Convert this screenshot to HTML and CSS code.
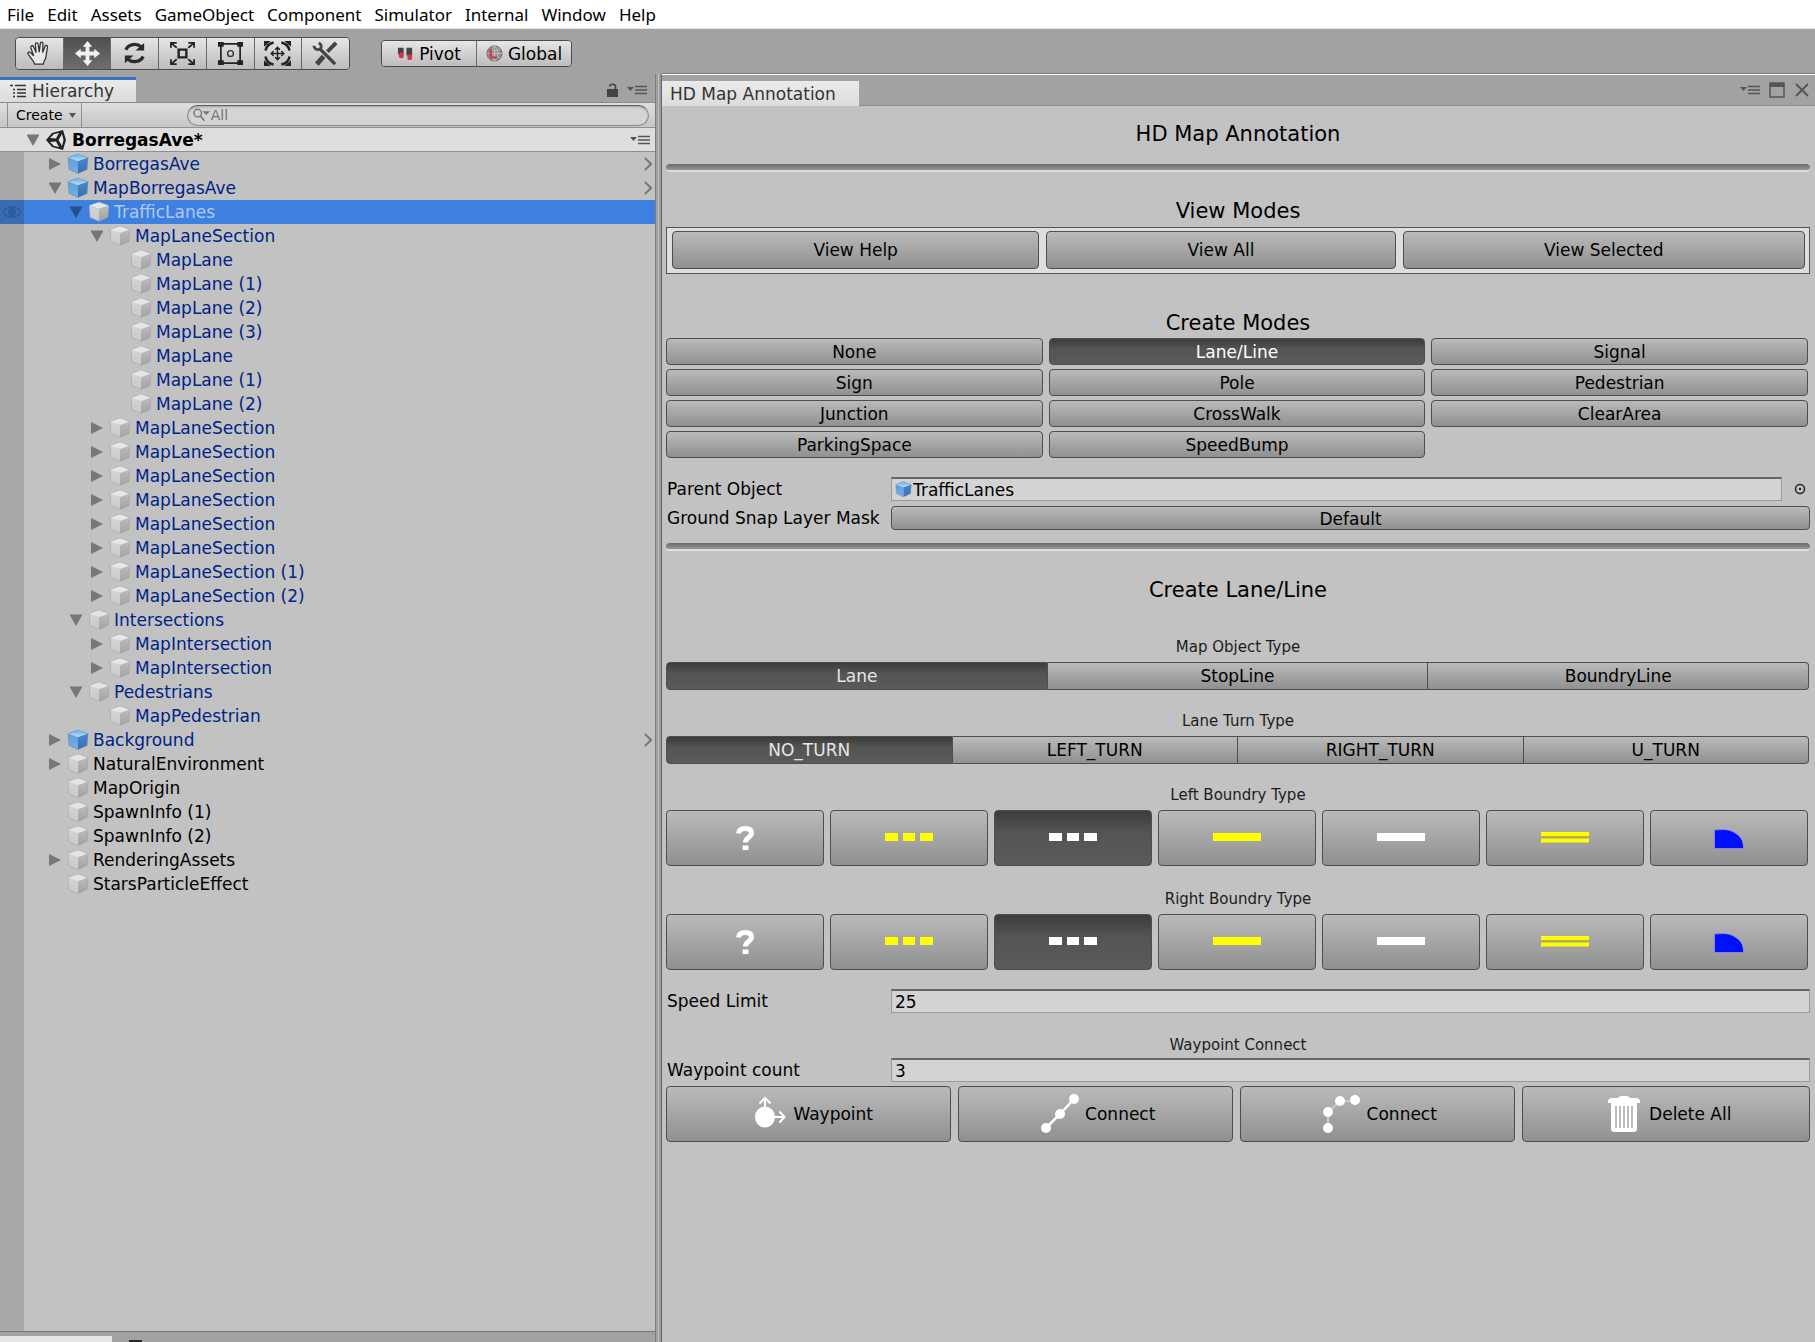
FILE: index.html
```html
<!DOCTYPE html>
<html lang="en">
<head>
<meta charset="utf-8">
<title>HD Map Annotation</title>
<link rel="stylesheet" href="styles.css">
</head>
<body>
<svg class="defs" aria-hidden="true">
  <defs>
    <linearGradient id="blueLeft" x1="0" y1="0" x2="0" y2="1"><stop offset="0" stop-color="#5c9edb"/><stop offset="1" stop-color="#78b0e2"/></linearGradient>
    <linearGradient id="blueRight" x1="0" y1="0" x2="0" y2="1"><stop offset="0" stop-color="#4a86c8"/><stop offset="1" stop-color="#3a70b4"/></linearGradient>
    <linearGradient id="blueTop" x1="0" y1="0" x2="0" y2="1"><stop offset="0" stop-color="#6fb0ea"/><stop offset="1" stop-color="#b4dcfa"/></linearGradient>
    <linearGradient id="greyLeft" x1="0" y1="0" x2="0" y2="1"><stop offset="0" stop-color="#d4d4d4"/><stop offset="1" stop-color="#c9c9c9"/></linearGradient>
    <linearGradient id="greyRight" x1="0" y1="0" x2="0" y2="1"><stop offset="0" stop-color="#bdbdbd"/><stop offset="1" stop-color="#a2a2a2"/></linearGradient>
  </defs>
  <symbol id="cube-blue" viewBox="0 0 22 22">
    <path d="M1 4.500 11 8v12.500L2 16.500z" fill="url(#blueLeft)"/>
    <path d="M21 4.500 11 8v12.500l9-4z" fill="url(#blueRight)"/>
    <path d="M1 4.500 11 1l10 3.500L11 8z" fill="url(#blueTop)"/>
    <path d="M1 4.500 11 1l10 3.500-1 12-9 4-9-4z" fill="none" stroke="#5585b5" stroke-opacity=".5"/>
  </symbol>
  <symbol id="cube-grey" viewBox="0 0 22 22">
    <path d="M1 4.500 11 8v12.500L2 16.500z" fill="url(#greyLeft)"/>
    <path d="M21 4.500 11 8v12.500l9-4z" fill="url(#greyRight)"/>
    <path d="M1 4.500 11 1l10 3.500L11 8z" fill="#e6e6e6"/>
    <path d="M1 4.500 11 1l10 3.500-1 12-9 4-9-4z" fill="none" stroke="#8c8c8c" stroke-opacity=".35"/>
  </symbol>
  <symbol id="closed" viewBox="0 0 12 14"><path d="M0 1l12 6-12 6z" fill="currentColor"/></symbol>
  <symbol id="open" viewBox="0 0 12 14"><path d="M-.5 1.500h13L6 13z" fill="currentColor"/></symbol>
  <symbol id="chevron" viewBox="0 0 8 14"><path d="M1 1l6 6-6 6" fill="none" stroke="#777" stroke-width="2"/></symbol>
  <symbol id="menu" viewBox="0 0 20 12"><path d="M0 3h7L3.500 7z" fill="#555"/><path d="M8 2.500h12M8 6h12M8 9.500h12" stroke="#555" stroke-width="1.500"/></symbol>
  <symbol id="unknown" viewBox="0 0 48 24"><path d="M17.500 7.500C18 3 21 2.500 24.500 2.500c4 0 6 1.500 6 4.500 0 4.500-6 4-6 9.500" fill="none" stroke="#fff" stroke-width="5"/><path d="M21.500 19.500h6V24h-6z" fill="#fff"/></symbol>
  <symbol id="dashed" viewBox="0 0 48 24"><path d="M0 7h13v8H0zM18 7h12v8H18zM35 7h13v8H35z" fill="currentColor"/></symbol>
  <symbol id="solid" viewBox="0 0 48 24"><path d="M0 7h48v8H0z" fill="currentColor"/></symbol>
  <symbol id="double" viewBox="0 0 48 24"><path d="M0 6h48v4H0zM0 12.500h48v4H0z" fill="#ffff00"/><path d="M0 10.500h48v1.500H0z" fill="#b5b52a"/></symbol>
  <symbol id="curb" viewBox="0 0 48 24"><path d="M9.500 4c10-.8 16-.8 22 4 5 3.500 7 7 7 14.500h-29z" fill="#0010ff" stroke="#9a9ae0" stroke-width=".7"/></symbol>
</svg>

<nav class="menubar">
  <a href="#">File</a><a href="#">Edit</a><a href="#">Assets</a><a href="#">GameObject</a><a href="#">Component</a><a href="#">Simulator</a><a href="#">Internal</a><a href="#">Window</a><a href="#">Help</a>
</nav>

<header class="toolbar">
  <div class="tools">
    <button aria-label="Hand"><svg viewBox="0 0 30 28"><path d="M10 25c-1-4-6-8-7-11-.3-1.800 2-2 3.500-.3L9 16.500 6 8c-.5-2 2-2.800 2.800-1l2.700 6L10.700 4.500c0-2 2.600-2.200 3 0l1 8 1.200-9c.3-2 2.700-1.800 2.700.2l-.3 9.300 2.400-6.500c.8-1.800 3-1 2.600 1-.7 3.500-1 7-1.800 10.500-.5 3-2.500 4-2.500 7z" fill="#e8e8e8" stroke="#333" stroke-width="1.300"/></svg></button>
    <button class="on" aria-label="Move"><svg viewBox="0 0 30 28"><path d="M15 1l5 6h-3v5h5V9l6 5-6 5v-3h-5v5h3l-5 6-5-6h3v-5H8v3l-6-5 6-5v3h5V7h-3z" fill="#f2f2f2"/></svg></button>
    <button aria-label="Rotate"><svg viewBox="0 0 30 28"><path d="M6 10c3-6 11-7 16-3M24 17c-3 6-11 7-16 3" fill="none" stroke="#2b2b2b" stroke-width="3.500"/><path d="M25 3v8h-9zM5 24v-8h9z" fill="#2b2b2b"/></svg></button>
    <button aria-label="Scale"><svg viewBox="0 0 30 28"><path d="M11 10h8v8h-8z" fill="none" stroke="#222" stroke-width="2.500"/><path d="M3 3l6 5M27 3l-6 5M3 25l6-5M27 25l-6-5M3 8V3h6M21 3h6v5M3 20v5h6M21 25h6v-5" fill="none" stroke="#222" stroke-width="1.800"/></svg></button>
    <button aria-label="Rect"><svg viewBox="0 0 30 28"><path d="M5 4h20v20H5z" fill="none" stroke="#222" stroke-width="1.800"/><path d="M2 2h6v5H2zM22 2h6v5h-6zM2 21h6v5H2zM22 21h6v5h-6z" fill="#222"/><circle cx="15" cy="14" r="3" fill="none" stroke="#333" stroke-width="1.500"/></svg></button>
    <button aria-label="Transform"><svg viewBox="0 0 30 28"><path d="M9 14h12M15 8v12M12.500 10 15 7.500l2.500 2.500M12.500 18l2.500 2.500 2.500-2.500M11 11.500 8.500 14l2.500 2.500M19 11.500l2.500 2.500-2.500 2.500" fill="none" stroke="#222" stroke-width="1.500"/><path d="M2.500 11C3.500 6 6 3.500 11 2.500M19 2.500c5 1 7.500 3.500 8.500 8.500M27.500 17c-1 5-3.500 7.500-8.500 8.500M11 25.500c-5-1-7.500-3.500-8.500-8.500" fill="none" stroke="#222" stroke-width="2.600"/><path d="M1 1h7L1 7zM29 1h-7l7 6zM1 27h7l-7-6zM29 27h-7l7-6z" fill="#222"/></svg></button>
    <button aria-label="Custom tools"><svg viewBox="0 0 30 28"><path d="M26 3 17 12" stroke="#444" stroke-width="4"/><path d="M13 17l-7 8" stroke="#444" stroke-width="5"/><path d="M9 9l16 16" stroke="#444" stroke-width="3.500"/><path d="M8 3c4 2 3 7-1 7-2 0-4-2-4-4" fill="none" stroke="#444" stroke-width="2.800"/></svg></button>
  </div>
  <div class="tools pivots">
    <button><svg class="small" viewBox="0 0 18 16"><path d="M1 2h6v7H1zM10 2h6v8h-6z" fill="#444"/><rect x="2" y="7" width="5" height="6" rx="2" fill="#d5374a"/><rect x="11" y="9" width="5" height="6" rx="2" fill="#d5374a"/></svg>Pivot</button>
    <button><svg class="small" viewBox="0 0 18 18"><circle cx="9" cy="9" r="8" fill="#8b8b8b" stroke="#666"/><path d="M9 1v16M1 9h16M3 4c4 3 8 3 12 0M3 14c4-3 8-3 12 0M9 1c-5 4-5 12 0 16 5-4 5-12 0-16" fill="none" stroke="#d0d0d0" stroke-width=".8"/><path d="M5 4v9h7" fill="none" stroke="#d5374a" stroke-width="2.400"/></svg>Global</button>
  </div>
</header>

<main class="workspace">
  <section class="hierarchy">
    <div class="tabstrip">
      <h2 class="tab"><svg viewBox="0 0 16 14"><path d="M0 1.500h3M5 1.500h11M3 5.500h2M7 5.500h9M3 9h2M7 9h9M3 12.500h2M7 12.500h9" stroke="#333" stroke-width="1.500"/></svg>Hierarchy</h2>
      <div class="tabicons">
        <svg class="lock" viewBox="0 0 11 14"><path d="M0 6h11v8H0z" fill="#444"/><path d="M2.500 3.500C3 .5 8.500.5 8.500 3.500V6" fill="none" stroke="#444" stroke-width="1.600"/></svg>
        <svg class="menuicon"><use href="#menu"/></svg>
      </div>
    </div>
    <div class="searchbar">
      <button class="create">Create <svg viewBox="0 0 7 5"><path d="M0 0h7L3.500 5z" fill="#555"/></svg></button>
      <label class="search"><svg viewBox="0 0 18 14"><circle cx="5" cy="5" r="4" fill="none" stroke="#777" stroke-width="1.500"/><path d="M8 8l4 5" stroke="#777" stroke-width="1.800"/><path d="M10 3h8l-4 4z" fill="#777"/></svg><input type="text" placeholder="All" aria-label="Search hierarchy"></label>
    </div>
    <div class="scene">
      <svg class="fold"><use href="#open"/></svg>
      <svg class="unity" viewBox="0 0 22 22"><path d="M1 11 7 4l11-3 3 10-3 10-11-3z" fill="#222"/><path d="M5 9l4-4 5-1-3 5.500zM5 13l4 4 5 1-3-5.500zM13.500 11 17 5l1.500 6-1.500 6z" fill="#e4e4e4"/></svg>
      <strong>BorregasAve*</strong>
      <svg class="menuicon"><use href="#menu"/></svg>
    </div>
    <ul class="tree">
      <li class="row prefab"><svg class="fold"><use href="#closed"/></svg><svg class="cube"><use href="#cube-blue"/></svg>BorregasAve<svg class="chev"><use href="#chevron"/></svg></li>
      <li class="row prefab"><svg class="fold"><use href="#open"/></svg><svg class="cube"><use href="#cube-blue"/></svg>MapBorregasAve<svg class="chev"><use href="#chevron"/></svg></li>
      <li class="row l2 selected"><svg class="eye" viewBox="0 0 18 14"><path d="M0 7c4-7 14-7 18 0-4 7-14 7-18 0z" fill="none" stroke="#2b5c9c" stroke-width="1.500"/><circle cx="9" cy="7" r="4" fill="#2b5c9c"/></svg><svg class="fold"><use href="#open"/></svg><svg class="cube"><use href="#cube-grey"/></svg>TrafficLanes</li>
      <li class="row l3 prefab"><svg class="fold"><use href="#open"/></svg><svg class="cube"><use href="#cube-grey"/></svg>MapLaneSection</li>
      <li class="row l4 prefab"><span class="fold"></span><svg class="cube"><use href="#cube-grey"/></svg>MapLane</li>
      <li class="row l4 prefab"><span class="fold"></span><svg class="cube"><use href="#cube-grey"/></svg>MapLane (1)</li>
      <li class="row l4 prefab"><span class="fold"></span><svg class="cube"><use href="#cube-grey"/></svg>MapLane (2)</li>
      <li class="row l4 prefab"><span class="fold"></span><svg class="cube"><use href="#cube-grey"/></svg>MapLane (3)</li>
      <li class="row l4 prefab"><span class="fold"></span><svg class="cube"><use href="#cube-grey"/></svg>MapLane</li>
      <li class="row l4 prefab"><span class="fold"></span><svg class="cube"><use href="#cube-grey"/></svg>MapLane (1)</li>
      <li class="row l4 prefab"><span class="fold"></span><svg class="cube"><use href="#cube-grey"/></svg>MapLane (2)</li>
      <li class="row l3 prefab"><svg class="fold"><use href="#closed"/></svg><svg class="cube"><use href="#cube-grey"/></svg>MapLaneSection</li>
      <li class="row l3 prefab"><svg class="fold"><use href="#closed"/></svg><svg class="cube"><use href="#cube-grey"/></svg>MapLaneSection</li>
      <li class="row l3 prefab"><svg class="fold"><use href="#closed"/></svg><svg class="cube"><use href="#cube-grey"/></svg>MapLaneSection</li>
      <li class="row l3 prefab"><svg class="fold"><use href="#closed"/></svg><svg class="cube"><use href="#cube-grey"/></svg>MapLaneSection</li>
      <li class="row l3 prefab"><svg class="fold"><use href="#closed"/></svg><svg class="cube"><use href="#cube-grey"/></svg>MapLaneSection</li>
      <li class="row l3 prefab"><svg class="fold"><use href="#closed"/></svg><svg class="cube"><use href="#cube-grey"/></svg>MapLaneSection</li>
      <li class="row l3 prefab"><svg class="fold"><use href="#closed"/></svg><svg class="cube"><use href="#cube-grey"/></svg>MapLaneSection (1)</li>
      <li class="row l3 prefab"><svg class="fold"><use href="#closed"/></svg><svg class="cube"><use href="#cube-grey"/></svg>MapLaneSection (2)</li>
      <li class="row l2 prefab"><svg class="fold"><use href="#open"/></svg><svg class="cube"><use href="#cube-grey"/></svg>Intersections</li>
      <li class="row l3 prefab"><svg class="fold"><use href="#closed"/></svg><svg class="cube"><use href="#cube-grey"/></svg>MapIntersection</li>
      <li class="row l3 prefab"><svg class="fold"><use href="#closed"/></svg><svg class="cube"><use href="#cube-grey"/></svg>MapIntersection</li>
      <li class="row l2 prefab"><svg class="fold"><use href="#open"/></svg><svg class="cube"><use href="#cube-grey"/></svg>Pedestrians</li>
      <li class="row l3 prefab"><span class="fold"></span><svg class="cube"><use href="#cube-grey"/></svg>MapPedestrian</li>
      <li class="row prefab"><svg class="fold"><use href="#closed"/></svg><svg class="cube"><use href="#cube-blue"/></svg>Background<svg class="chev"><use href="#chevron"/></svg></li>
      <li class="row"><svg class="fold"><use href="#closed"/></svg><svg class="cube"><use href="#cube-grey"/></svg>NaturalEnvironment</li>
      <li class="row"><span class="fold"></span><svg class="cube"><use href="#cube-grey"/></svg>MapOrigin</li>
      <li class="row"><span class="fold"></span><svg class="cube"><use href="#cube-grey"/></svg>SpawnInfo (1)</li>
      <li class="row"><span class="fold"></span><svg class="cube"><use href="#cube-grey"/></svg>SpawnInfo (2)</li>
      <li class="row"><svg class="fold"><use href="#closed"/></svg><svg class="cube"><use href="#cube-grey"/></svg>RenderingAssets</li>
      <li class="row"><span class="fold"></span><svg class="cube"><use href="#cube-grey"/></svg>StarsParticleEffect</li>
    </ul>
    <div class="lower"><div class="lowertab"></div><div class="lowermark"></div></div>
  </section>

  <div class="splitter"></div>

  <section class="annotation">
    <div class="tabstrip">
      <h2 class="tab">HD Map Annotation</h2>
      <div class="tabicons">
        <svg class="menuicon"><use href="#menu"/></svg>
        <svg class="winicon" viewBox="0 0 16 16"><path d="M1 1h14v14H1z" fill="none" stroke="#555" stroke-width="1.500"/><path d="M1 1h14v4H1z" fill="#555"/></svg>
        <svg class="winicon" viewBox="0 0 16 16"><path d="M2 2l12 12M14 2 2 14" stroke="#555" stroke-width="1.800"/></svg>
      </div>
    </div>
    <form class="panel">
      <h1 class="title">HD Map Annotation</h1>
      <hr>
      <h3 class="title">View Modes</h3>
      <div class="viewbox">
        <button type="button">View Help</button><button type="button">View All</button><button type="button">View Selected</button>
      </div>
      <h3 class="title modes">Create Modes</h3>
      <div class="modegrid">
        <button type="button">None</button><button type="button" class="on">Lane/Line</button><button type="button">Signal</button>
        <button type="button">Sign</button><button type="button">Pole</button><button type="button">Pedestrian</button>
        <button type="button">Junction</button><button type="button">CrossWalk</button><button type="button">ClearArea</button>
        <button type="button">ParkingSpace</button><button type="button">SpeedBump</button>
      </div>
      <div class="field">
        <label for="parent">Parent Object</label>
        <div class="objectbox"><svg viewBox="0 0 22 22"><use href="#cube-blue"/></svg><input id="parent" type="text" value="TrafficLanes"></div>
        <button type="button" class="picker" aria-label="Select object"><svg viewBox="0 0 12 12"><circle cx="6" cy="6" r="4.500" fill="none" stroke="#222" stroke-width="1.500"/><circle cx="6" cy="6" r="1.200" fill="#222"/></svg></button>
      </div>
      <div class="field">
        <label for="mask">Ground Snap Layer Mask</label>
        <select id="mask"><option>Default</option></select>
      </div>
      <hr class="divider">
      <h3 class="title">Create Lane/Line</h3>

      <h4 class="sub first">Map Object Type</h4>
      <div class="segments">
        <button type="button" class="on">Lane</button><button type="button">StopLine</button><button type="button">BoundryLine</button>
      </div>
      <h4 class="sub">Lane Turn Type</h4>
      <div class="segments">
        <button type="button" class="on">NO_TURN</button><button type="button">LEFT_TURN</button><button type="button">RIGHT_TURN</button><button type="button">U_TURN</button>
      </div>
      <h4 class="sub">Left Boundry Type</h4>
      <div class="tiles">
        <button type="button" aria-label="Unknown"><svg><use href="#unknown"/></svg></button>
        <button type="button" aria-label="Dotted yellow" class="yellow"><svg><use href="#dashed"/></svg></button>
        <button type="button" aria-label="Dotted white" class="white on"><svg><use href="#dashed"/></svg></button>
        <button type="button" aria-label="Solid yellow" class="yellow"><svg><use href="#solid"/></svg></button>
        <button type="button" aria-label="Solid white" class="white"><svg><use href="#solid"/></svg></button>
        <button type="button" aria-label="Double yellow"><svg><use href="#double"/></svg></button>
        <button type="button" aria-label="Curb"><svg><use href="#curb"/></svg></button>
      </div>
      <h4 class="sub">Right Boundry Type</h4>
      <div class="tiles">
        <button type="button" aria-label="Unknown"><svg><use href="#unknown"/></svg></button>
        <button type="button" aria-label="Dotted yellow" class="yellow"><svg><use href="#dashed"/></svg></button>
        <button type="button" aria-label="Dotted white" class="white on"><svg><use href="#dashed"/></svg></button>
        <button type="button" aria-label="Solid yellow" class="yellow"><svg><use href="#solid"/></svg></button>
        <button type="button" aria-label="Solid white" class="white"><svg><use href="#solid"/></svg></button>
        <button type="button" aria-label="Double yellow"><svg><use href="#double"/></svg></button>
        <button type="button" aria-label="Curb"><svg><use href="#curb"/></svg></button>
      </div>
      <div class="field speed">
        <label for="speed">Speed Limit</label>
        <input id="speed" type="text" value="25">
      </div>
      <h4 class="sub">Waypoint Connect</h4>
      <div class="field">
        <label for="count">Waypoint count</label>
        <input id="count" type="text" value="3">
      </div>
      <div class="actions">
        <button type="button"><svg viewBox="0 0 40 40"><ellipse cx="17" cy="23" rx="10" ry="10.500" fill="#fff"/><path d="M17 14V4M11.500 9.500 17 4l5.500 5.500M26 23h10M31.500 17.500l5 5.500-5 5.500" fill="none" stroke="#fff" stroke-width="2"/></svg>Waypoint</button>
        <button type="button"><svg viewBox="0 0 40 40"><path d="M6 34 20 20 34 5" stroke="#fff" stroke-width="2.500"/><circle cx="6" cy="34" r="5" fill="#fff"/><circle cx="20" cy="20" r="5" fill="#fff"/><circle cx="34" cy="5" r="5" fill="#fff"/></svg>Connect</button>
        <button type="button"><svg viewBox="0 0 40 40"><path d="M6 34V18L18 7h15" fill="none" stroke="#ccc" stroke-width="2"/><circle cx="6" cy="34" r="5" fill="#fff"/><circle cx="6" cy="18" r="5" fill="#fff"/><circle cx="18" cy="7" r="5" fill="#fff"/><circle cx="33" cy="6" r="5" fill="#fff"/></svg>Connect</button>
        <button type="button"><svg viewBox="0 0 40 40"><path d="M4 7c0-2 2-3 4-3h6c1-3 11-3 12 0h6c2 0 4 1 4 3v2H4z" fill="#fff"/><path d="M7 9h26v26c0 2-1 3-3 3H10c-2 0-3-1-3-3z" fill="#fff"/><path d="M12 12v22M16 12v22M20 12v22M24 12v22M28 12v22" stroke="#a8a8a8" stroke-width="1.500"/></svg>Delete All</button>
      </div>
    </form>
  </section>
</main>
</body>
</html>
```
FILE: styles.css
```css
* { box-sizing: border-box; }

body {
  margin: 0;
  min-height: 100vh;
  display: flex;
  flex-direction: column;
  background: #a2a2a2;
  color: #000;
  font: 17px/24px "DejaVu Sans", sans-serif;
}

h1, h2, h3, h4, ul { margin: 0; padding: 0; font-weight: 400; list-style: none; }
button, input, select { font: inherit; color: inherit; margin: 0; padding: 0; border-radius: 0; }
svg { flex: none; display: block; }
.defs { position: absolute; width: 0; height: 0; }

.menubar {
  display: flex;
  gap: 13px;
  height: 29px;
  padding: 0 7px;
  background: #fff;
  border-bottom: 1px solid #e4e4e4;
  font: 17px/29px "Noto Sans", sans-serif;
}
.menubar a { color: #000; text-decoration: none; }

.toolbar {
  display: flex;
  align-items: center;
  gap: 31px;
  height: 44px;
  padding: 8px 15px 3px;
}
.tools { display: flex; width: 335px; border: 1px solid #4c4c4c; border-radius: 4px; overflow: hidden; }
.tools button {
  flex: 1;
  display: flex;
  align-items: center;
  justify-content: center;
  height: 31px;
  border: 0;
  border-right: 1px solid #6a6a6a;
  background: linear-gradient(#e6e6e6, #bcbcbc);
}
.tools button:last-child { border-right: 0; }
.tools button.on { background: linear-gradient(#505050, #6e6e6e); }
.tools svg { width: 29px; height: 27px; }
.tools .small { width: 17px; height: 17px; }
.pivots { width: 191px; }
.pivots button { height: 25px; gap: 5px; }

.workspace {
  flex: 1;
  display: grid;
  grid-template-columns: minmax(0, 655fr) 7px minmax(0, 1153fr);
}

.hierarchy { display: flex; flex-direction: column; padding-top: 4px; }
.tabstrip { display: flex; justify-content: space-between; align-items: stretch; color: #333; }
.tab { display: flex; align-items: center; font-size: 17px; background: linear-gradient(#eaeaea, #dcdcdc); }
.tabicons { display: flex; align-items: center; }
.menuicon { width: 20px; height: 12px; }

.hierarchy .tabstrip { height: 26px; border-bottom: 1px solid #8a8a8a; }
.hierarchy .tab { gap: 6px; padding: 0 22px 0 10px; border-top: 3px solid #3c73c4; }
.hierarchy .tab svg { width: 16px; height: 14px; }
.hierarchy .tabicons { gap: 9px; padding-right: 8px; }
.lock { width: 11px; height: 14px; }

.searchbar {
  display: flex;
  align-items: center;
  justify-content: space-between;
  height: 25px;
  padding: 0 6px 0 7px;
  border-bottom: 1px solid #8f8f8f;
  background: linear-gradient(#dedede, #c6c6c6);
  font-size: 14px;
}
.create {
  display: flex;
  align-items: center;
  gap: 6px;
  height: 24px;
  padding: 0 5px 0 8px;
  border: solid #8f8f8f;
  border-width: 0 1px;
  background: none;
}
.create svg { width: 7px; height: 5px; }
.search {
  display: flex;
  align-items: center;
  gap: 1px;
  width: 72%;
  height: 21px;
  padding-left: 5px;
  border: 1px solid #8c8c8c;
  border-top-color: #606060;
  border-radius: 11px;
  background: #d4d4d4;
  box-shadow: inset 0 1px 2px #a0a0a0;
}
.search svg { width: 17px; height: 14px; }
.search input { flex: 1; min-width: 0; height: 19px; border: 0; outline: 0; background: none; }
.search input::placeholder { color: #777; opacity: 1; }

.scene {
  display: flex;
  align-items: center;
  height: 24px;
  padding: 0 5px 0 27px;
  border-bottom: 1px solid #8f8f8f;
  background: #dedede;
}
.scene .unity { width: 22px; height: 22px; margin: 0 5px 0 6px; }
.scene .menuicon { margin-left: auto; }

.fold { flex: none; width: 12px; height: 14px; color: #777; }

.tree {
  flex: 1;
  background: linear-gradient(90deg, #a9a9a9 24px, #c2c2c2 24px);
}
.row {
  display: flex;
  align-items: center;
  height: 24px;
  padding: 0 3px 0 49px;
}
.row.l2 { padding-left: 70px; }
.row.l3 { padding-left: 91px; }
.row.l4 { padding-left: 112px; }
.row.prefab { color: #002385; }
.row.selected {
  position: relative;
  color: #b0c8f4;
  background: linear-gradient(90deg, #3a6cb4 24px, #3d80df 24px);
}
.selected .fold { color: #244f8c; }
.eye { position: absolute; left: 3px; top: 5px; width: 18px; height: 14px; }
.cube { width: 22px; height: 22px; margin: 0 4px 0 6px; }
.chev { width: 8px; height: 14px; margin-left: auto; }

.lower {
  display: flex;
  align-items: flex-end;
  gap: 17px;
  height: 11px;
  border-top: 1px solid #777;
}
.lowertab { width: 112px; height: 6px; background: #e6e6e6; }
.lowermark { width: 13px; height: 2px; background: #2a2a2a; }

.splitter {
  margin-top: 1px;
  background: linear-gradient(90deg, #7c7c7c 1px, #a0a0a0 1px 3px, #c0c0c0 3px 4px, #9a9a9a 4px 6px, #666 6px);
}

.annotation { background: #c2c2c2; border-top: 1px solid #777; }
.annotation .tabstrip {
  height: 32px;
  border-top: 1px solid #fff;
  border-bottom: 1px solid #8d8d8d;
  background: #a2a2a2;
}
.annotation .tab { margin: 6px 0 -1px; padding: 0 23px 0 8px; }
.annotation .tabicons { gap: 9px; padding-right: 5px; }
.winicon { width: 16px; height: 16px; }

.panel { padding: 13px 5px 20px 4px; }
.title { font-size: 21px; line-height: 30px; text-align: center; }
hr {
  height: 8px;
  margin: 15px 0 24px;
  border: 0;
  border-bottom: 2px solid #dedede;
  border-radius: 4px;
  background: linear-gradient(#686868, #989898);
}
hr.divider { margin-top: 13px; }

.panel button, .panel select {
  border: 1px solid #4e4e4e;
  border-radius: 4px;
  background: linear-gradient(#bababa, #909090);
}
.panel button.on {
  color: #e6e6e6;
  background: linear-gradient(#3c3c3c, #545454 40%, #5a5a5a);
}

.viewbox {
  display: grid;
  grid-template-columns: 367fr 349fr 402fr;
  gap: 7px;
  height: 47px;
  margin-top: 1px;
  padding: 3px 4px 4px 5px;
  border: 1px solid #555;
  background: #dedede;
}
.modes { margin-top: 34px; }
.modegrid {
  display: grid;
  grid-template-columns: repeat(3, 1fr);
  grid-auto-rows: 27px;
  gap: 4px 6px;
  margin-bottom: 19px;
  padding-right: 2px;
}
.panel .modegrid .on { color: #fff; }

.field { display: flex; align-items: center; height: 24px; }
.field + .field { margin-top: 5px; }
.field label { flex: none; width: 225px; padding-left: 1px; }
.field > input, .field > select, .objectbox { flex: 1; min-width: 0; height: 24px; }
.field > input, .objectbox {
  padding: 0 3px;
  border: 1px solid #9a9a9a;
  border-top: 2px solid #666;
  background: #d3d3d3;
}
.field > select { appearance: none; text-align: center; text-align-last: center; }
.objectbox { display: flex; align-items: center; gap: 1px; }
.objectbox svg { width: 17px; height: 17px; }
.objectbox input { flex: 1; min-width: 0; height: 21px; border: 0; outline: 0; background: none; }
.panel .picker { width: 28px; height: 24px; padding-left: 12px; border: 0; background: none; }
.picker svg { width: 12px; height: 12px; }
.speed { margin-top: 19px; }

.sub { margin: 21px 0 5px; font-size: 15px; line-height: 20px; text-align: center; color: #1c1c1c; }
.sub.first { margin-top: 32px; }
.tiles + .sub { margin-top: 23px; }
.field + .sub { margin: 22px 0 3px; }

.segments { display: flex; padding-right: 1px; }
.segments button { flex: 1; height: 28px; border-radius: 0; border-left-width: 0; }
.segments button:first-child { border-left-width: 1px; border-radius: 4px 0 0 4px; }
.segments button:last-child { border-radius: 0 4px 4px 0; }

.tiles {
  display: grid;
  grid-template-columns: repeat(7, 1fr);
  grid-auto-rows: 56px;
  gap: 6px;
  padding-right: 2px;
}
.tiles button, .actions button { display: flex; align-items: center; justify-content: center; }
.tiles svg { width: 48px; height: 24px; }
.tiles .yellow { color: #ffff00; }
.tiles .white, .panel .white.on { color: #fff; }

.actions {
  display: grid;
  grid-template-columns: 286fr 275fr 275fr 289fr;
  grid-auto-rows: 56px;
  gap: 7px;
  margin-top: 4px;
}
.actions button { gap: 5px; padding-left: 4px; }
.actions svg { width: 40px; height: 40px; }
```
